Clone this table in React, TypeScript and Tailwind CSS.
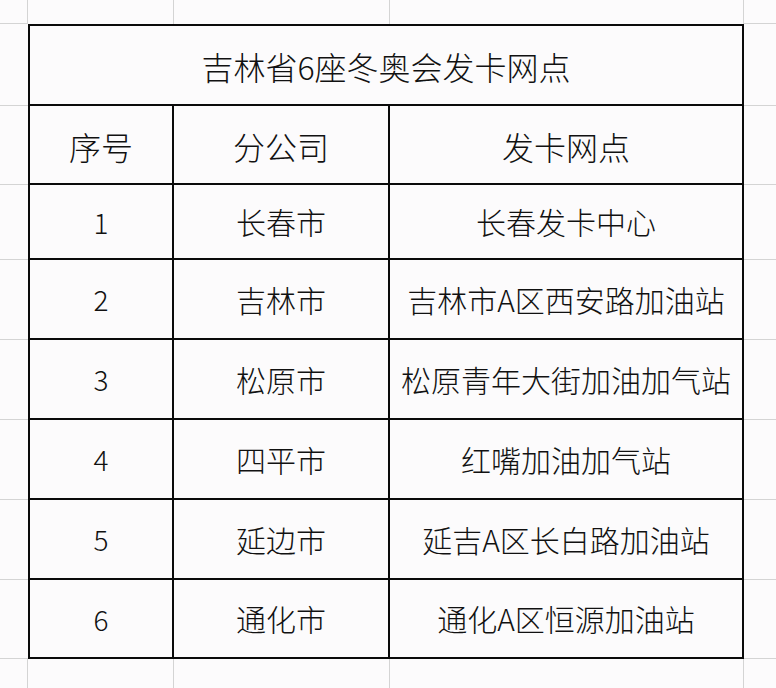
import React from 'react'

interface Row { no: string; branch: string; site: string }

const rows: Row[] = [
  { no: '1', branch: '长春市', site: '长春发卡中心' },
  { no: '2', branch: '吉林市', site: '吉林市A区西安路加油站' },
  { no: '3', branch: '松原市', site: '松原青年大街加油加气站' },
  { no: '4', branch: '四平市', site: '红嘴加油加气站' },
  { no: '5', branch: '延边市', site: '延吉A区长白路加油站' },
  { no: '6', branch: '通化市', site: '通化A区恒源加油站' },
]

// spreadsheet gridline + table border colours
const grid = 'border-[#d4d4d4]'
const ink = 'border-[#0a0a0a]'

const App: React.FC = () => {
  return (
    <div
      className="min-h-[688px] w-full bg-[#fcfbfc] text-[#111] font-light grid grid-cols-[28px_146px_216px_354px_1fr] grid-rows-[24px_82px_79px_75px_80px_80px_80px_80px_79px_1fr]"
      style={{ fontFamily: '"Noto Sans CJK SC", "Liberation Sans", sans-serif' }}
    >
      {/* top strip */}
      <div className={`border-r border-b ${grid}`} />
      <div className={`border-r ${grid}`} />
      <div className={`border-r ${grid}`} />
      <div className={`border-r ${grid}`} />
      <div className={`border-b ${grid}`} />

      {/* title */}
      <div className={`border-b ${grid}`} />
      <div className={`col-span-3 flex items-center justify-center border-2 ${ink} text-[32px] pt-[1px]`}>
        吉林省6座冬奥会发卡网点
      </div>
      <div className={`border-b ${grid}`} />

      {/* header */}
      <div className={`border-b ${grid}`} />
      <div className={`flex items-center justify-center border-l-2 border-r-2 border-b-2 ${ink} text-[32px] pt-[2px]`}>序号</div>
      <div className={`flex items-center justify-center border-r-2 border-b-2 ${ink} text-[32px] pt-[2px]`}>分公司</div>
      <div className={`flex items-center justify-center border-r-2 border-b-2 ${ink} text-[32px] pt-[2px]`}>发卡网点</div>
      <div className={`border-b ${grid}`} />

      {rows.map(r => (
        <React.Fragment key={r.no}>
          <div className={`border-b ${grid}`} />
          <div className={`flex items-center justify-center border-l-2 border-r-2 border-b-2 ${ink} text-[28px]`}>{r.no}</div>
          <div className={`flex items-center justify-center border-r-2 border-b-2 ${ink} text-[30px]`}>{r.branch}</div>
          <div className={`flex items-center justify-center border-r-2 border-b-2 ${ink} text-[30px] whitespace-nowrap`}>{r.site}</div>
          <div className={`border-b ${grid}`} />
        </React.Fragment>
      ))}

      {/* bottom strip */}
      <div className={`border-r ${grid}`} />
      <div className={`border-r ${grid}`} />
      <div className={`border-r ${grid}`} />
      <div className={`border-r ${grid}`} />
      <div />
    </div>
  )
}

export default App
